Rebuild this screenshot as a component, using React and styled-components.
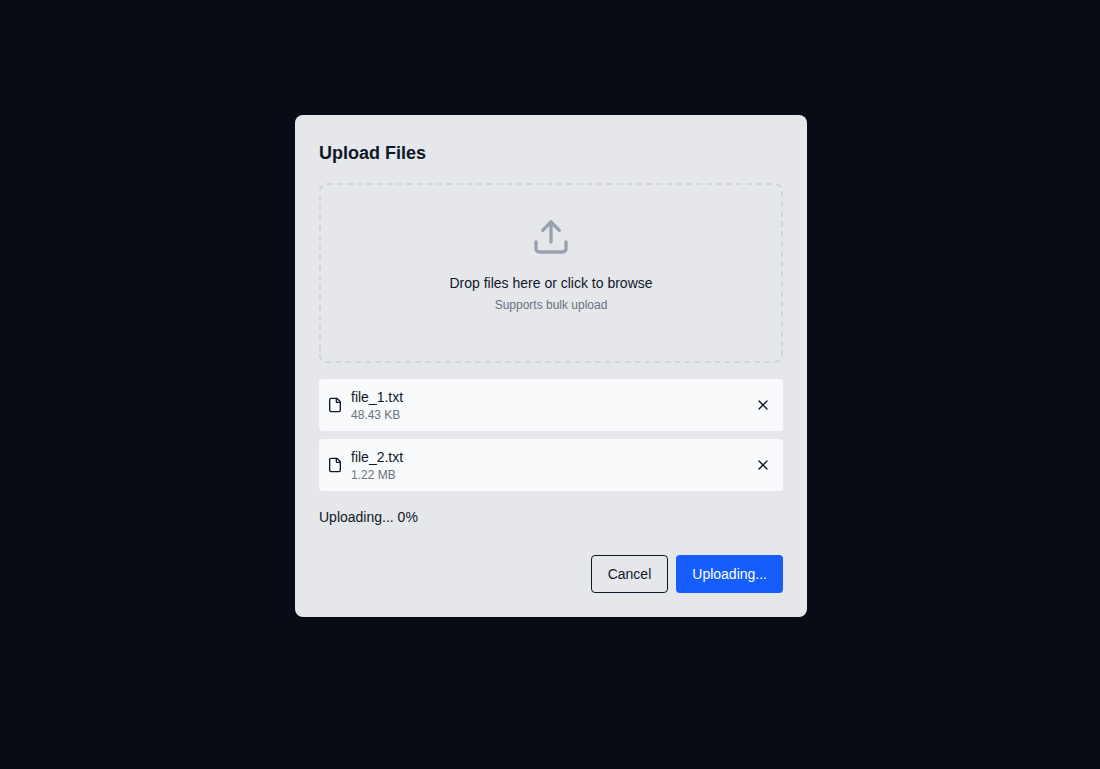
import React from "react";
import styled, { createGlobalStyle } from "styled-components";

const GlobalStyle = createGlobalStyle`
  *, *::before, *::after { box-sizing: border-box; }
  body {
    margin: 0;
    background: #080c14;
    color: #101828;
    font-family: "Liberation Sans", Arial, sans-serif;
    font-size: 14px;
    line-height: 20px;
  }
`;

const Overlay = styled.main`
  display: flex;
  justify-content: center;
  align-items: flex-start;
  min-height: 100vh;
  padding: 115px 16px 32px 18px;
`;

const Dialog = styled.section`
  width: 100%;
  max-width: 512px;
  padding: 24px;
  border-radius: 8px;
  background: #e5e7eb;
`;

const Title = styled.h2`
  margin: 0 0 16px;
  font-size: 18px;
  font-weight: 700;
  line-height: 28px;
`;

const DropZone = styled.label`
  display: flex;
  flex-direction: column;
  align-items: center;
  padding: 32px 32px 48px;
  border: 2px dashed #d1d5dc;
  border-radius: 8px;
  text-align: center;
  cursor: pointer;
`;

const FileInput = styled.input`
  display: none;
`;

const Icon = styled.svg.attrs({
  viewBox: "0 0 24 24",
  fill: "none",
  stroke: "currentColor",
  strokeWidth: 2,
  strokeLinecap: "round",
  strokeLinejoin: "round",
  "aria-hidden": true,
})`
  display: block;
  flex: none;
  width: ${({ $size }) => $size}px;
  height: ${({ $size }) => $size}px;
`;

const UploadIcon = styled(Icon)`
  margin-bottom: 16px;
  color: #99a1af;
`;

const Hint = styled.span`
  margin-top: 4px;
  color: #6a7282;
  font-size: 12px;
  line-height: 16px;
`;

const FileList = styled.ul`
  display: flex;
  flex-direction: column;
  gap: 8px;
  margin: 16px 0;
  padding: 0;
  list-style: none;
`;

const FileRow = styled.li`
  display: flex;
  align-items: center;
  gap: 8px;
  padding: 8px;
  border-radius: 4px;
  background: #f9fafb;
`;

const FileDetails = styled.div`
  flex: 1;
  min-width: 0;
`;

const FileName = styled.div`
  overflow: hidden;
  text-overflow: ellipsis;
  white-space: nowrap;
`;

const FileSize = styled.div`
  color: #6a7282;
  font-size: 12px;
  line-height: 16px;
`;

const RemoveButton = styled.button`
  padding: 4px;
  border: 0;
  border-radius: 4px;
  background: transparent;
  color: inherit;
  cursor: pointer;
`;

const Status = styled.p`
  margin: 0;
`;

const Actions = styled.div`
  display: flex;
  justify-content: flex-end;
  gap: 8px;
  margin-top: 28px;
`;

const Button = styled.button`
  padding: 8px 16px;
  border: ${({ $primary }) => ($primary ? "0" : "1px solid #101828")};
  border-radius: 4px;
  background: ${({ $primary }) => ($primary ? "#155dfc" : "transparent")};
  color: ${({ $primary }) => ($primary ? "#ffffff" : "inherit")};
  font: inherit;
  cursor: pointer;
`;

const files = [
  { name: "file_1.txt", size: "48.43 KB" },
  { name: "file_2.txt", size: "1.22 MB" },
];

export default function App() {
  return (
    <>
      <GlobalStyle />
      <Overlay>
        <Dialog role="dialog" aria-labelledby="upload-title">
          <Title id="upload-title">Upload Files</Title>
          <DropZone htmlFor="upload-input">
            <UploadIcon $size={40}>
              <path d="M21 15v4a2 2 0 0 1-2 2H5a2 2 0 0 1-2-2v-4" />
              <path d="m17 8-5-5-5 5" />
              <path d="M12 3v12" />
            </UploadIcon>
            <span>Drop files here or click to browse</span>
            <Hint>Supports bulk upload</Hint>
            <FileInput id="upload-input" type="file" multiple />
          </DropZone>
          <FileList>
            {files.map((file) => (
              <FileRow key={file.name}>
                <Icon $size={16}>
                  <path d="M6 22a2 2 0 0 1-2-2V4a2 2 0 0 1 2-2h8a2.4 2.4 0 0 1 1.704.706l3.588 3.588A2.4 2.4 0 0 1 20 8v12a2 2 0 0 1-2 2z" />
                  <path d="M14 2v5a1 1 0 0 0 1 1h5" />
                </Icon>
                <FileDetails>
                  <FileName>{file.name}</FileName>
                  <FileSize>{file.size}</FileSize>
                </FileDetails>
                <RemoveButton type="button" aria-label={`Remove ${file.name}`}>
                  <Icon $size={16}>
                    <path d="M18 6 6 18" />
                    <path d="m6 6 12 12" />
                  </Icon>
                </RemoveButton>
              </FileRow>
            ))}
          </FileList>
          <Status role="status">Uploading... 0%</Status>
          <Actions>
            <Button type="button">Cancel</Button>
            <Button type="button" $primary>
              Uploading...
            </Button>
          </Actions>
        </Dialog>
      </Overlay>
    </>
  );
}
